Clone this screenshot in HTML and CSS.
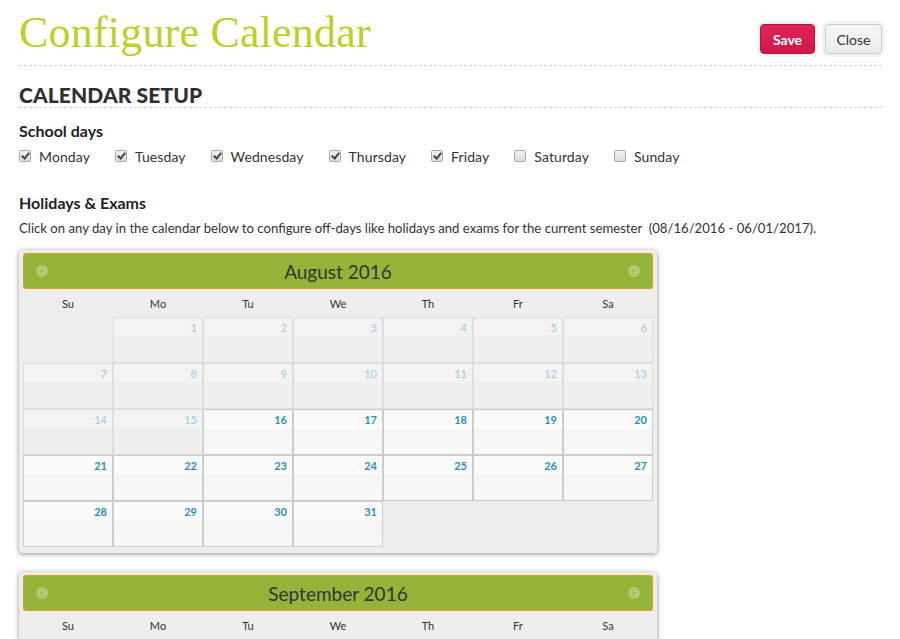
FILE: index.html
```html
<!DOCTYPE html>
<html>
<head>
<meta charset="utf-8">
<title>Configure Calendar</title>
<link rel="stylesheet" href="styles.css">
</head>
<body>
<div class="page">
  <div class="top">
    <h1 class="title">Configure Calendar</h1>
    <div class="actions">
      <button class="btn btn-save">Save</button>
      <button class="btn btn-close">Close</button>
    </div>
  </div>
  <h2 class="section">CALENDAR SETUP</h2>

  <h3 class="label">School days</h3>
  <div class="days">
    <label class="day"><span class="cb checked"></span>Monday</label>
    <label class="day"><span class="cb checked"></span>Tuesday</label>
    <label class="day"><span class="cb checked"></span>Wednesday</label>
    <label class="day"><span class="cb checked"></span>Thursday</label>
    <label class="day"><span class="cb checked"></span>Friday</label>
    <label class="day"><span class="cb"></span>Saturday</label>
    <label class="day"><span class="cb"></span>Sunday</label>
  </div>

  <h3 class="label label-holidays">Holidays &amp; Exams</h3>
  <p class="hint">Click on any day in the calendar below to configure off-days like holidays and exams for the current semester &nbsp;(08/16/2016 - 06/01/2017).</p>

  <div class="cal">
    <div class="cal-head">
      <span class="nav nav-prev"><svg width="12" height="12" viewBox="0 0 12 12"><circle cx="6" cy="6" r="6" fill="#fff" fill-opacity="0.3"/><path d="M7.2 3.2 L4.2 6 L7.2 8.8 Z" fill="#95b53a" fill-opacity="0.7"/></svg></span>
      <span class="cal-title">August 2016</span>
      <span class="nav nav-next"><svg width="12" height="12" viewBox="0 0 12 12"><circle cx="6" cy="6" r="6" fill="#fff" fill-opacity="0.3"/><path d="M4.8 3.2 L7.8 6 L4.8 8.8 Z" fill="#95b53a" fill-opacity="0.7"/></svg></span>
    </div>
    <div class="wk"><span>Su</span><span>Mo</span><span>Tu</span><span>We</span><span>Th</span><span>Fr</span><span>Sa</span></div>
    <div class="grid">
      <div class="cell empty"></div>
      <div class="cell off">1</div><div class="cell off">2</div><div class="cell off">3</div><div class="cell off">4</div><div class="cell off">5</div><div class="cell off">6</div>
      <div class="cell off">7</div><div class="cell off">8</div><div class="cell off">9</div><div class="cell off">10</div><div class="cell off">11</div><div class="cell off">12</div><div class="cell off">13</div>
      <div class="cell off">14</div><div class="cell off">15</div><div class="cell">16</div><div class="cell">17</div><div class="cell">18</div><div class="cell">19</div><div class="cell">20</div>
      <div class="cell">21</div><div class="cell">22</div><div class="cell">23</div><div class="cell">24</div><div class="cell">25</div><div class="cell">26</div><div class="cell">27</div>
      <div class="cell">28</div><div class="cell">29</div><div class="cell">30</div><div class="cell">31</div>
    </div>
  </div>

  <div class="cal">
    <div class="cal-head">
      <span class="nav nav-prev"><svg width="12" height="12" viewBox="0 0 12 12"><circle cx="6" cy="6" r="6" fill="#fff" fill-opacity="0.3"/><path d="M7.2 3.2 L4.2 6 L7.2 8.8 Z" fill="#95b53a" fill-opacity="0.7"/></svg></span>
      <span class="cal-title">September 2016</span>
      <span class="nav nav-next"><svg width="12" height="12" viewBox="0 0 12 12"><circle cx="6" cy="6" r="6" fill="#fff" fill-opacity="0.3"/><path d="M4.8 3.2 L7.8 6 L4.8 8.8 Z" fill="#95b53a" fill-opacity="0.7"/></svg></span>
    </div>
    <div class="wk"><span>Su</span><span>Mo</span><span>Tu</span><span>We</span><span>Th</span><span>Fr</span><span>Sa</span></div>
    <div class="grid">
      <div class="cell empty"></div><div class="cell empty"></div><div class="cell empty"></div><div class="cell empty"></div>
      <div class="cell">1</div><div class="cell">2</div><div class="cell">3</div>
      <div class="cell">4</div><div class="cell">5</div><div class="cell">6</div><div class="cell">7</div><div class="cell">8</div><div class="cell">9</div><div class="cell">10</div>
      <div class="cell">11</div><div class="cell">12</div><div class="cell">13</div><div class="cell">14</div><div class="cell">15</div><div class="cell">16</div><div class="cell">17</div>
      <div class="cell">18</div><div class="cell">19</div><div class="cell">20</div><div class="cell">21</div><div class="cell">22</div><div class="cell">23</div><div class="cell">24</div>
      <div class="cell">25</div><div class="cell">26</div><div class="cell">27</div><div class="cell">28</div><div class="cell">29</div><div class="cell">30</div>
    </div>
  </div>
</div>
</body>
</html>
```

FILE: styles.css
```css
* { box-sizing: border-box; }

body {
  margin: 0;
  background: #fff;
  color: #333;
  font-family: Lato, "Open Sans", "Liberation Sans", sans-serif;
}

.page {
  padding: 0 18px 40px 19px;
}

.top {
  display: flex;
  justify-content: space-between;
  align-items: flex-start;
  height: 66px;
  border-bottom: 1px dashed #cfcfcf;
}

.title {
  margin: 0;
  padding-top: 9px;
  font-family: "Liberation Serif", "DejaVu Serif", serif;
  font-weight: normal;
  font-size: 44px;
  line-height: 48px;
  color: #bccf2a;
  letter-spacing: 0.2px;
}

.actions {
  display: flex;
  gap: 10px;
  margin-top: 24px;
}

.btn {
  height: 30px;
  border-radius: 4px;
  font-family: Lato, "Liberation Sans", sans-serif;
  font-size: 14px;
  padding: 0;
  box-shadow: 0 0 0 3px #f4f4f4;
}

.btn-save {
  width: 55px;
  background: linear-gradient(#e0245a, #cf1749);
  border: 1px solid #b3133e;
  color: #fff;
  font-weight: bold;
}

.btn-close {
  width: 57px;
  background: linear-gradient(#f7f7f7, #ececec);
  border: 1px solid #c9c9c9;
  color: #333;
}

.section {
  margin: 0;
  padding-top: 17px;
  height: 42px;
  font-size: 21px;
  line-height: 24px;
  font-weight: 900;
  color: #2f2f2f;
  letter-spacing: 0.1px;
  border-bottom: 1px dashed #cfcfcf;
}

.label {
  margin: 13px 0 0;
  font-size: 16px;
  line-height: 19px;
  font-weight: bold;
  color: #222;
}

.days {
  display: flex;
  margin-top: 7px;
  height: 18px;
  align-items: center;
}

.day {
  display: flex;
  align-items: center;
  font-size: 14px;
  letter-spacing: 0.1px;
  color: #333;
  margin-right: 25px;
}

.cb {
  width: 12px;
  height: 12px;
  margin-right: 8px;
  border: 1px solid #a9a9a9;
  border-radius: 2px;
  background: linear-gradient(#f2f2f2, #dcdcdc);
  position: relative;
}

.cb.checked::after {
  content: "";
  position: absolute;
  left: 3px;
  top: 0px;
  width: 3px;
  height: 6px;
  border: solid #444;
  border-width: 0 2px 2px 0;
  transform: rotate(40deg);
}

.label-holidays {
  margin-top: 28px;
}

.hint {
  margin: 7px 0 0;
  font-size: 13.15px;
  line-height: 18px;
  color: #333;
}

.cal {
  width: 638px;
  margin-top: 13px;
  padding: 3px 4px 6px;
  background: #eeeeee;
  border-radius: 3px;
  box-shadow: 0 1px 5px rgba(0, 0, 0, 0.45);
}

.cal + .cal {
  margin-top: 19px;
}

.cal-head {
  height: 36px;
  display: flex;
  align-items: center;
  justify-content: space-between;
  padding: 0 12px;
  background: #95b53a;
  border: 1px solid #e69a24;
  border-radius: 3px;
}

.nav {
  display: flex;
  width: 12px;
  height: 12px;
}

.cal-title {
  font-size: 19px;
  color: #333;
}

.wk {
  display: grid;
  grid-template-columns: repeat(7, 90px);
  height: 28px;
  align-items: center;
  font-size: 11px;
  color: #333;
  text-align: center;
}

.grid {
  display: grid;
  grid-template-columns: repeat(7, 90px);
  grid-auto-rows: 46px;
}

.cell {
  border: 1px solid #cccccc;
  background: linear-gradient(#fbfbfb 0%, #fbfbfb 40%, #f5f5f5 45%, #f8f8f8 100%);
  text-align: right;
  padding: 3px 5px 0 0;
  font-size: 11px;
  font-weight: bold;
  color: #2b8fbf;
}

.cell.off {
  border-color: #dedede;
  background: linear-gradient(#f3f3f3 0%, #f3f3f3 40%, #efefef 45%, #f0f0f0 100%);
  color: #9fcbe0;
  font-weight: normal;
}

.cell.empty {
  border: none;
  background: transparent;
}
```
